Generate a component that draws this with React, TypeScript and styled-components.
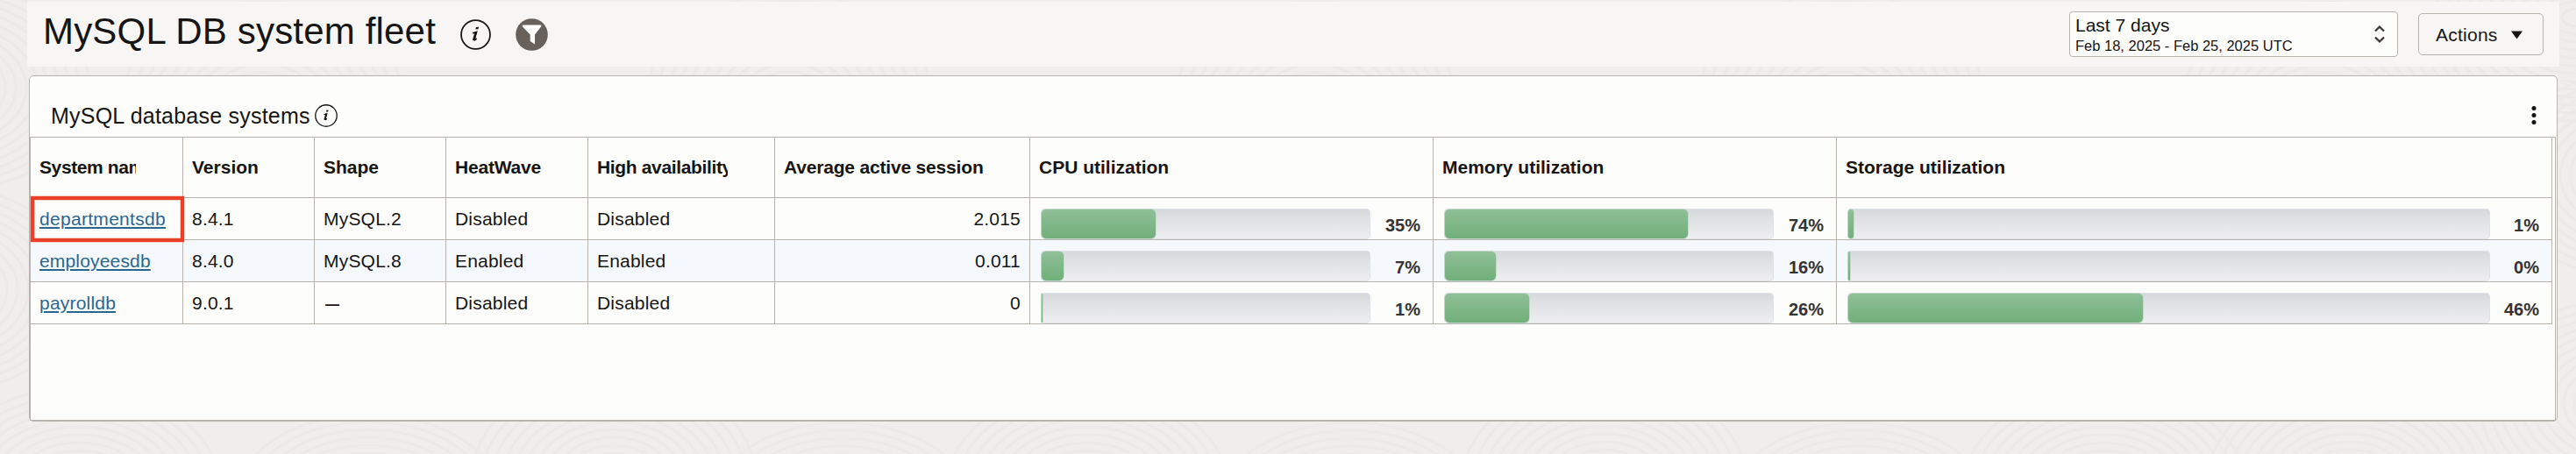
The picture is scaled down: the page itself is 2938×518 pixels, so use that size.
import React from "react";
import styled, { createGlobalStyle } from "styled-components";

const LINE = "#b9b3ae";
const INK = "#161513";

const GlobalStyle = createGlobalStyle`
  * { box-sizing: border-box; }
  html, body { margin: 0; padding: 0; }
  body {
    background: #efeeec;
    color: ${INK};
    font-family: "Liberation Sans", Arial, sans-serif;
    font-size: 21px;
  }
`;

const Page = styled.div`
  position: relative;
  width: 2938px;
  height: 518px;
  padding: 2px 19px 0 31px;
  overflow: hidden;
`;

const Backdrop = styled.svg`
  position: absolute;
  inset: 0;
  z-index: -1;
`;

const Header = styled.header`
  display: flex;
  align-items: center;
  height: 74px;
  padding: 0 18px 0 18px;
  background: #f7f6f5;
`;

const Title = styled.h1`
  margin: 0 26px 0 0;
  padding-bottom: 6px;
  width: 450px;
  font-size: 42px;
  line-height: 48px;
  font-weight: 400;
  white-space: nowrap;
  letter-spacing: 0.18px;
`;

const FilterBadge = styled.svg`
  margin-left: 28px;
  margin-right: auto;
`;

const RangeSelect = styled.div`
  display: flex;
  align-items: center;
  justify-content: space-between;
  width: 375px;
  height: 52px;
  margin-right: 23px;
  padding: 0 14px 0 6px;
  background: #fdfdfc;
  border: 1px solid ${LINE};
  border-radius: 4px;
`;

const RangeName = styled.div`
  line-height: 26px;
`;

const RangeDates = styled.div`
  font-size: 16.5px;
  line-height: 20px;
`;

const ActionsButton = styled.div`
  display: flex;
  align-items: center;
  gap: 15px;
  width: 143px;
  height: 48px;
  padding: 2px 0 0 19px;
  border: 1px solid ${LINE};
  border-radius: 5px;
  letter-spacing: 0.25px;
`;

const Card = styled.section`
  width: 2884px;
  height: 395px;
  margin: 10px 0 0 2px;
  padding-right: 1px;
  background: #fdfdfc;
  border: 1px solid ${LINE};
  border-radius: 5px;
`;

const CardHead = styled.div`
  display: flex;
  align-items: center;
  height: 69px;
  padding: 20px 22px 0 24px;
`;

const CardTitle = styled.h2`
  margin: 0 7px 0 0;
  width: 294px;
  font-size: 25px;
  line-height: 30px;
  font-weight: 400;
  white-space: nowrap;
  letter-spacing: 0.22px;
`;

const Kebab = styled.svg`
  margin-left: auto;
`;

const TableFrame = styled.div`
  height: 324px;
  border: 1px solid ${LINE};
`;

const Row = styled.div<{ $head?: boolean; $tinted?: boolean }>`
  display: grid;
  grid-template-columns: 174px 150px 150px 162px 213px 291px 460px 460px 816px;
  width: 2876px;
  height: ${(p) => (p.$head ? 69 : 48)}px;
  background: ${(p) => (p.$tinted ? "#f5f9fd" : "transparent")};
`;

const Cell = styled.div<{ $right?: boolean }>`
  position: relative;
  padding: 10px ${(p) => (p.$right ? 10 : 12)}px 0 10px;
  border-right: 1px solid ${LINE};
  border-bottom: 1px solid ${LINE};
  line-height: 28px;
  letter-spacing: 0.2px;
  text-align: ${(p) => (p.$right ? "right" : "left")};
`;

const Dash = styled.span`
  margin-left: 2px;
  font-size: 16px;
  font-weight: 700;
`;

const HeadCell = styled.div<{ $wide?: boolean }>`
  padding: 20px ${(p) => (p.$wide ? 10 : 53)}px 0 10px;
  border-right: 1px solid ${LINE};
  border-bottom: 1px solid ${LINE};
`;

const HeadText = styled.div<{ $spacing?: number }>`
  overflow: hidden;
  line-height: 28px;
  font-weight: 700;
  white-space: nowrap;
  letter-spacing: ${(p) => p.$spacing ?? 0}px;
`;

const SystemLink = styled.a<{ $spacing: number }>`
  color: #2a6790;
  letter-spacing: ${(p) => p.$spacing}px;
  text-decoration: underline;
  text-decoration-thickness: 2px;
  text-underline-offset: 2px;
  text-decoration-skip-ink: auto;
`;

const Highlight = styled.div`
  position: absolute;
  left: 0;
  top: -2px;
  width: 175px;
  height: 52px;
  border: 4px solid #ec3f27;
  box-shadow: 0 0 0 0.5px #f5a396, inset 0 0 0 0.5px #f5a396;
  z-index: 1;
`;

const MeterCell = styled.div`
  display: flex;
  align-items: flex-end;
  justify-content: space-between;
  padding: 0 14px 0 12px;
  border-right: 1px solid ${LINE};
  border-bottom: 1px solid ${LINE};
`;

const Track = styled.div<{ $wide?: boolean }>`
  width: ${(p) => (p.$wide ? 733 : 376)}px;
  height: 35px;
  padding: 1px 0 0 0.5px;
  border-radius: 5px;
  background: linear-gradient(#d6d9db, #efeff1);
  box-shadow: inset 0 0 0 1px #dde2e8;
`;

const Fill = styled.div`
  height: 33px;
  border-radius: 5px;
  background: linear-gradient(#8fbf96, #71b07a);
  box-shadow: 0 0 0 0.5px #a9c9b1;
`;

const Percent = styled.div`
  padding-bottom: 3px;
  font-size: 20px;
  font-weight: 700;
  line-height: 26px;
  color: #333;
`;

function InfoIcon({ size }: { size: number }) {
  return (
    <svg width={size} height={size} viewBox="0 0 34 34" fill="none">
      <circle cx="17" cy="17" r="16" stroke={INK} strokeWidth="1.7" />
      <path d="M17.400 8.800l3-.4-.6 2.600-2.900.2z" fill={INK} />
      <path d="M13.600 15.200c1.700-.1 3-.6 4.400-1.200l-2.500 8.600c-.2.900.8.600 2.600-1.300" stroke={INK} strokeWidth="1.600" />
      <path d="M17.300 14.200l-2.600 9" stroke={INK} strokeWidth="2.400" />
    </svg>
  );
}

const columns: { label: string; wide?: boolean; spacing?: number }[] = [
  { label: "System name", spacing: -0.4 },
  { label: "Version" },
  { label: "Shape" },
  { label: "HeatWave", spacing: -0.2 },
  { label: "High availability", spacing: -0.35 },
  { label: "Average active sessions", spacing: -0.18 },
  { label: "CPU utilization", wide: true },
  { label: "Memory utilization", wide: true },
  { label: "Storage utilization", wide: true },
];

const systems = [
  { name: "departmentsdb", spacing: 0.3, version: "8.4.1", shape: "MySQL.2", state: "Disabled", sessions: "2.015", meters: [[35, 130], [74, 277], [1, 6]], marked: true },
  { name: "employeesdb", spacing: 0.17, version: "8.4.0", shape: "MySQL.8", state: "Enabled", sessions: "0.011", meters: [[7, 25.5], [16, 58.5], [0, 2]], tinted: true },
  { name: "payrolldb", spacing: 0.2, version: "9.0.1", shape: "", state: "Disabled", sessions: "0", meters: [[1, 1.5], [26, 96.5], [46, 336]] },
];

const swirlCentres = [
  [-60, 100], [-70, 330], [90, 560], [420, 590], [700, 545], [960, 600], [1240, 560], [1540, 600], [1830, 550],
  [2120, 600], [2400, 560], [2680, 550], [2990, 460], [3010, 200], [2940, 20], [300, 120], [900, 110], [1500, 120], [2100, 110], [2650, 120],
];

export default function App() {
  return (
    <Page>
      <GlobalStyle />
      <Backdrop width="2938" height="518" fill="none" stroke="#ebeae9" strokeWidth="3">
        {swirlCentres.map(([cx, cy]) =>
          Array.from({ length: 13 }, (_, i) => (
            <ellipse key={`${cx}-${cy}-${i}`} cx={cx} cy={cy} rx={18 + i * 12} ry={10 + i * 9} />
          ))
        )}
      </Backdrop>
      <Header>
        <Title>MySQL DB system fleet</Title>
        <InfoIcon size={35} />
        <FilterBadge width="37" height="37" viewBox="0 0 37 37">
          <circle cx="18.500" cy="18.500" r="18.300" fill="#67605b" />
          <path d="M7.700 7.500h21.600v1.800l-7.300 9.200v11l-5.300-3.400v-7.600L7.700 9.300z" fill="#fff" />
        </FilterBadge>
        <RangeSelect>
          <div>
            <RangeName>Last 7 days</RangeName>
            <RangeDates>Feb 18, 2025 - Feb 25, 2025 UTC</RangeDates>
          </div>
          <svg width="12" height="22" viewBox="0 0 12 22" fill="none" stroke="#3a3734" strokeWidth="2.200">
            <path d="M1 7.500L6 2.500l5 5M1 14.500L6 19.500l5-5" />
          </svg>
        </RangeSelect>
        <ActionsButton>
          Actions
          <svg width="13" height="10" viewBox="0 0 13 10"><path d="M0 .5h13L6.500 9.500z" fill={INK} /></svg>
        </ActionsButton>
      </Header>
      <Card>
        <CardHead>
          <CardTitle>MySQL database systems</CardTitle>
          <InfoIcon size={26} />
          <Kebab width="6" height="22" viewBox="0 0 6 22" fill={INK}>
            <circle cx="3" cy="2.500" r="2.500" />
            <circle cx="3" cy="10.500" r="2.500" />
            <circle cx="3" cy="18.500" r="2.500" />
          </Kebab>
        </CardHead>
        <TableFrame>
          <Row $head>
            {columns.map((c) => (
              <HeadCell key={c.label} $wide={c.wide}>
                <HeadText $spacing={c.spacing}>{c.label}</HeadText>
              </HeadCell>
            ))}
          </Row>
          {systems.map((s) => (
            <Row key={s.name} $tinted={s.tinted}>
              <Cell>
                {s.marked && <Highlight />}
                <SystemLink $spacing={s.spacing}>{s.name}</SystemLink>
              </Cell>
              <Cell>{s.version}</Cell>
              <Cell>{s.shape || <Dash>—</Dash>}</Cell>
              <Cell>{s.state}</Cell>
              <Cell>{s.state}</Cell>
              <Cell $right>{s.sessions}</Cell>
              {s.meters.map(([percent, width], i) => (
                <MeterCell key={i}>
                  <Track $wide={i === 2}>
                    <Fill style={{ width }} />
                  </Track>
                  <Percent>{percent}%</Percent>
                </MeterCell>
              ))}
            </Row>
          ))}
        </TableFrame>
      </Card>
    </Page>
  );
}
